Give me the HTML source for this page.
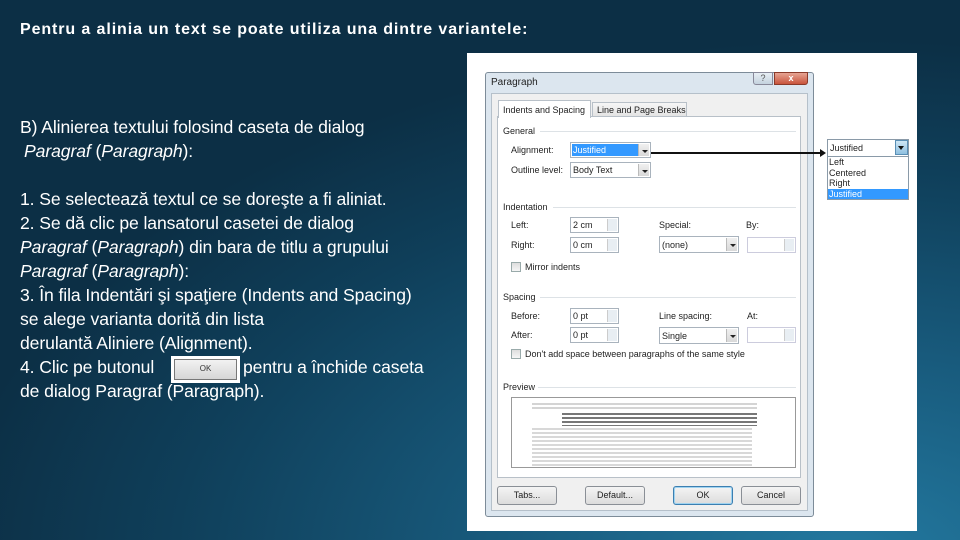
<!DOCTYPE html>
<html><head><meta charset="utf-8"><style>
*{margin:0;padding:0;box-sizing:border-box}
body{width:960px;height:540px;overflow:hidden;position:relative;font-family:"Liberation Sans",sans-serif;
background:radial-gradient(ellipse 900px 520px at 850px 560px,#2379a0 0%,#185a7c 40%,#0f3f5a 75%,#0c2f45 100%);}
.a{position:absolute;white-space:nowrap}
.t{color:#fff;font-size:17.6px;left:20px;letter-spacing:-0.1px}
.d{font-size:9px;color:#222;font-family:"Liberation Sans",sans-serif}
.box{position:absolute;background:#fff;border:1px solid #a9b3bd}
.btn{position:absolute;border:1px solid #8a8f96;border-radius:3px;background:linear-gradient(#f4f4f4,#dcdcdc);font-size:9px;text-align:center;line-height:17px;color:#222}
.dd{position:absolute;width:11px;top:1px;bottom:1px;right:1px;background:linear-gradient(#f0f0f0,#d8d8d8);border-left:1px solid #bbb}
.dd:after{content:"";position:absolute;left:3px;top:6px;border:3px solid transparent;border-top:3px solid #222}
.sp{position:absolute;width:10px;top:1px;bottom:1px;right:1px;background:#e8eef3;border-left:1px solid #ccc}
.hr{position:absolute;height:1px;background:#dde2e6}
.cb{position:absolute;width:10px;height:10px;border:1px solid #9aa;background:linear-gradient(#ddd,#f6f6f6)}
</style></head><body>
<div class="a" style="left:20px;top:21px;color:#fff;font-weight:bold;font-size:16px;letter-spacing:0.9px">Pentru a alinia un text se poate utiliza una dintre variantele:</div>
<div class="a t" style="top:117px">B) Alinierea textului folosind caseta de dialog</div>
<div class="a t" style="top:141px;left:24px"><i>Paragraf</i> (<i>Paragraph</i>):</div>
<div class="a t" style="top:189px">1. Se selectează textul ce se doreşte a fi aliniat.</div>
<div class="a t" style="top:213px">2. Se dă clic pe lansatorul casetei de dialog</div>
<div class="a t" style="top:237px"><i>Paragraf</i> (<i>Paragraph</i>) din bara de titlu a grupului</div>
<div class="a t" style="top:261px"><i>Paragraf</i> (<i>Paragraph</i>):</div>
<div class="a t" style="top:285px">3. În fila Indentări şi spaţiere (Indents and Spacing)</div>
<div class="a t" style="top:309px">se alege varianta dorită din lista</div>
<div class="a t" style="top:333px">derulantă Aliniere (Alignment).</div>
<div class="a t" style="top:357px">4. Clic pe butonul</div>
<div class="a t" style="top:357px;left:243px">pentru a închide caseta</div>
<div class="a t" style="top:381px">de dialog Paragraf (Paragraph).</div>
<div style="position:absolute;left:171px;top:356px;width:69px;height:27px;background:#fff;padding:3px"><div style="width:100%;height:100%;background:linear-gradient(#f2f2f2,#d6d6d6);border:1px solid #777;font-size:8px;text-align:center;line-height:18px;color:#333">OK</div></div>

<div style="position:absolute;left:467px;top:53px;width:450px;height:478px;background:#fff"></div>
<div style="position:absolute;left:485px;top:72px;width:329px;height:445px;background:#dce6ef;border:1px solid #7d8c99;border-radius:3px"></div>
<div style="position:absolute;left:491px;top:93px;width:317px;height:418px;background:#f0f0f0;border:1px solid #b5c0ca"></div>
<div class="a d" style="left:491px;top:77px;font-size:10px">Paragraph</div>
<div style="position:absolute;left:753px;top:72px;width:20px;height:13px;background:linear-gradient(#e8eef4,#c4d2de);border:1px solid #889;border-radius:0 0 0 3px;font-size:9px;text-align:center;line-height:11px;color:#555">?</div>
<div style="position:absolute;left:774px;top:72px;width:34px;height:13px;background:linear-gradient(#e6a493,#c9543c);border:1px solid #8a3a2a;border-radius:0 0 3px 0;color:#fff;font-size:9px;text-align:center;line-height:11px;font-weight:bold">x</div>
<div style="position:absolute;left:497px;top:116px;width:304px;height:362px;background:#fff;border:1px solid #b8c0c8"></div>
<div style="position:absolute;left:498px;top:100px;width:93px;height:18px;background:#fff;border:1px solid #b8c0c8;border-bottom:none"></div>
<div class="a d" style="left:503px;top:105px">Indents and Spacing</div>
<div style="position:absolute;left:592px;top:102px;width:95px;height:14px;background:linear-gradient(#f6f6f6,#e4e4e4);border:1px solid #b8c0c8;border-bottom:none"></div>
<div class="a d" style="left:597px;top:105px">Line and Page Breaks</div>

<div class="a d" style="left:503px;top:126px">General</div><div class="hr" style="left:540px;top:131px;width:256px"></div>
<div class="a d" style="left:511px;top:145px">Alignment:</div>
<div class="box" style="left:570px;top:142px;width:81px;height:16px"><div style="position:absolute;left:1px;top:1px;width:66px;height:12px;background:#3399ff;color:#fff;font-size:9px;line-height:12px;padding-left:1px">Justified</div><div class="dd"></div></div>
<div style="position:absolute;left:651px;top:152px;width:172px;height:1.5px;background:#111"></div>
<div style="position:absolute;left:820px;top:149px;border:4px solid transparent;border-left:6px solid #111"></div>
<div class="a d" style="left:511px;top:165px">Outline level:</div>
<div class="box" style="left:570px;top:162px;width:81px;height:16px"><div class="a d" style="left:2px;top:2px">Body Text</div><div class="dd"></div></div>

<div class="a d" style="left:503px;top:202px">Indentation</div><div class="hr" style="left:553px;top:207px;width:243px"></div>
<div class="a d" style="left:511px;top:220px">Left:</div>
<div class="box" style="left:570px;top:217px;width:49px;height:16px"><div class="a d" style="left:2px;top:2px">2 cm</div><div class="sp"></div></div>
<div class="a d" style="left:659px;top:220px">Special:</div><div class="a d" style="left:746px;top:220px">By:</div>
<div class="a d" style="left:511px;top:240px">Right:</div>
<div class="box" style="left:570px;top:237px;width:49px;height:16px"><div class="a d" style="left:2px;top:2px">0 cm</div><div class="sp"></div></div>
<div class="box" style="left:659px;top:236px;width:80px;height:17px"><div class="a d" style="left:2px;top:3px">(none)</div><div class="dd"></div></div>
<div class="box" style="left:747px;top:237px;width:49px;height:16px;border-color:#ccd"><div class="sp"></div></div>
<div class="cb" style="left:511px;top:262px"></div><div class="a d" style="left:525px;top:262px">Mirror indents</div>

<div class="a d" style="left:503px;top:292px">Spacing</div><div class="hr" style="left:540px;top:297px;width:256px"></div>
<div class="a d" style="left:511px;top:311px">Before:</div>
<div class="box" style="left:570px;top:308px;width:49px;height:16px"><div class="a d" style="left:2px;top:2px">0 pt</div><div class="sp"></div></div>
<div class="a d" style="left:659px;top:311px">Line spacing:</div><div class="a d" style="left:747px;top:311px">At:</div>
<div class="a d" style="left:511px;top:330px">After:</div>
<div class="box" style="left:570px;top:327px;width:49px;height:16px"><div class="a d" style="left:2px;top:2px">0 pt</div><div class="sp"></div></div>
<div class="box" style="left:659px;top:327px;width:80px;height:17px"><div class="a d" style="left:2px;top:3px">Single</div><div class="dd"></div></div>
<div class="box" style="left:747px;top:327px;width:49px;height:16px;border-color:#ccd"><div class="sp"></div></div>
<div class="cb" style="left:511px;top:349px"></div><div class="a d" style="left:525px;top:349px">Don't add space between paragraphs of the same style</div>

<div class="a d" style="left:503px;top:382px">Preview</div><div class="hr" style="left:538px;top:387px;width:258px"></div>
<div style="position:absolute;left:511px;top:397px;width:285px;height:71px;background:#fff;border:1px solid #999;overflow:hidden">
<div style="position:absolute;left:20px;top:5px;width:225px;height:8px;background:repeating-linear-gradient(#d4d4d4 0 2px,#fff 2px 4px)"></div>
<div style="position:absolute;left:50px;top:15px;width:195px;height:13px;background:repeating-linear-gradient(#777 0 2px,#fff 2px 4px)"></div>
<div style="position:absolute;left:20px;top:30px;width:220px;height:38px;background:repeating-linear-gradient(#d8d8d8 0 2px,#fff 2px 4px)"></div>
</div>

<div class="btn" style="left:497px;top:486px;width:60px;height:19px">Tabs...</div>
<div class="btn" style="left:585px;top:486px;width:60px;height:19px">Default...</div>
<div class="btn" style="left:673px;top:486px;width:60px;height:19px;border-color:#3c7fb1;box-shadow:inset 0 0 0 1px #9fd3f0">OK</div>
<div class="btn" style="left:741px;top:486px;width:60px;height:19px">Cancel</div>

<div style="position:absolute;left:827px;top:139px;width:82px;height:61px;background:#fff;border:1px solid #8a9aa8"></div>
<div class="a d" style="left:830px;top:143px">Justified</div>
<div style="position:absolute;left:895px;top:140px;width:13px;height:15px;background:linear-gradient(#cfe6f5,#8fc0e0);border:1px solid #5a8fb5"></div>
<div style="position:absolute;left:898px;top:146px;border:3px solid transparent;border-top:4px solid #111"></div>
<div style="position:absolute;left:828px;top:156px;width:80px;height:1px;background:#8a9aa8"></div>
<div class="a d" style="left:829px;top:157px">Left</div>
<div class="a d" style="left:829px;top:168px">Centered</div>
<div class="a d" style="left:829px;top:178px">Right</div>
<div style="position:absolute;left:828px;top:189px;width:80px;height:10px;background:#3399ff"></div>
<div class="a d" style="left:829px;top:189px;color:#fff">Justified</div>
</body></html>
